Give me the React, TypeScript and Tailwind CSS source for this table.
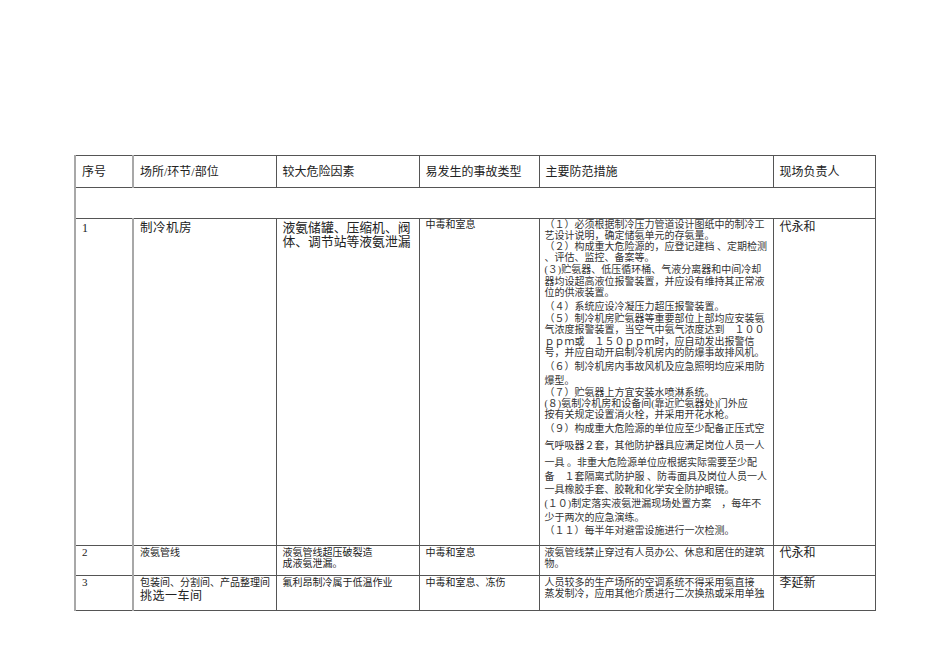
import React from 'react'

const lines: [string, string][] = [
  ['（１）必须根据制冷压力管道设计图纸中的制冷工', 'h-[11px]'],
  ['艺设计说明，确定储氨单元的存氨量。', 'h-[11px]'],
  ['（２）构成重大危险源的，应登记建档 、定期检测', 'h-[11px]'],
  ['、评估、监控、备案等。', 'h-[12px]'],
  ['(３)贮氨器、低压循环桶、气液分离器和中间冷却', 'h-[12px]'],
  ['器均设超高液位报警装置，并应设有维持其正常液', 'h-[11px]'],
  ['位的供液装置。', 'h-[14px]'],
  ['（４）系统应设冷凝压力超压报警装置。', 'h-[12px]'],
  ['（５）制冷机房贮氨器等重要部位上部均应安装氨', 'h-[11px]'],
  ['气浓度报警装置，当空气中氨气浓度达到　１００', 'h-[12px]'],
  ['ｐｐｍ或　１５０ｐｐｍ时，应自动发出报警信', 'h-[11px]'],
  ['号，并应自动开启制冷机房内的防爆事故排风机。', 'h-[14px]'],
  ['（６）制冷机房内事故风机及应急照明均应采用防', 'h-[14px]'],
  ['爆型。', 'h-[12px]'],
  ['（７）贮氨器上方宜安装水喷淋系统。', 'h-[11px]'],
  ['(８)氨制冷机房和设备间(靠近贮氨器处)门外应', 'h-[11px]'],
  ['按有关规定设置消火栓，并采用开花水枪。', 'h-[14px]'],
  ['（９）构成重大危险源的单位应至少配备正压式空', 'h-[17px]'],
  ['气呼吸器２套，其他防护器具应满足岗位人员一人', 'h-[17px]'],
  ['一具 。非重大危险源单位应根据实际需要至少配', 'h-[14px]'],
  ['备　１套隔离式防护服 、防毒面具及岗位人员一人', 'h-[13px]'],
  ['一具橡胶手套、胶靴和化学安全防护眼镜。', 'h-[14px]'],
  ['(１０)制定落实液氨泄漏现场处置方案　，每年不', 'h-[14px]'],
  ['少于两次的应急演练。', 'h-[13px]'],
  ['（１１）每半年对避雷设施进行一次检测。', 'h-[11px]'],
]

const cell = 'border border-[#555] px-[6px] overflow-hidden'
const first = 'border-l-2 border-l-[#a8a8a8] border-r-2 border-r-[#a8a8a8]'

export default function App() {
  return (
    <div
      className="w-[950px] h-[672px] bg-white pt-[155px] pl-[74px] text-[#222]"
      style={{ fontFamily: '"Liberation Serif", "Noto Sans CJK SC", serif' }}
    >
      <table className="table-fixed border-collapse w-[800px]">
        <colgroup>
          <col className="w-[58px]" />
          <col className="w-[143px]" />
          <col className="w-[143px]" />
          <col className="w-[120px]" />
          <col className="w-[234px]" />
          <col className="w-[102px]" />
        </colgroup>
        <tbody>
          {/* header */}
          <tr className="h-[32px] text-[12px] align-middle">
            <td className={`${cell} ${first}`}>序号</td>
            <td className={cell}>场所/环节/部位</td>
            <td className={cell}>较大危险因素</td>
            <td className={cell}>易发生的事故类型</td>
            <td className={cell}>主要防范措施</td>
            <td className={cell}>现场负责人</td>
          </tr>
          <tr className="h-[31px]">
            <td colSpan={6} className={`${cell} border-l-2 border-l-[#a8a8a8]`}></td>
          </tr>

          {/* row 1 */}
          <tr className="h-[327px] align-top">
            <td className={`${cell} ${first} text-[12px] leading-[14px] pt-[2px]`}>1</td>
            <td className={`${cell} text-[12.5px] leading-[14px] pt-[2px] tracking-[0.5px]`}>制冷机房</td>
            <td className={`${cell} text-[12.8px] leading-[14px] pt-[2px]`}>
              <div className="whitespace-nowrap">液氨储罐、压缩机、阀</div>
              <div className="whitespace-nowrap">体、调节站等液氨泄漏</div>
            </td>
            <td className={`${cell} text-[10px] leading-[11px]`}>中毒和室息</td>
            <td className={`${cell} text-[10px] pl-[5px] pr-[2px]`}>
              {lines.map(([t, h], i) => (
                <div key={i} className={`${h} leading-[11px] whitespace-nowrap text-[#333]`}>
                  {t}
                </div>
              ))}
            </td>
            <td className={`${cell} text-[12px] leading-[14px] pt-[1px]`}>代永和</td>
          </tr>

          {/* row 2 */}
          <tr className="h-[30px] align-top">
            <td className={`${cell} ${first} text-[11px] leading-[11px] pt-[1px]`}>2</td>
            <td className={`${cell} text-[10px] leading-[11px] pt-[1px]`}>液氨管线</td>
            <td className={`${cell} text-[10px] leading-[11px] pt-[1px]`}>
              <div>液氨管线超压破裂造</div>
              <div>成液氨泄漏。</div>
            </td>
            <td className={`${cell} text-[10px] leading-[11px] pt-[1px]`}>中毒和室息</td>
            <td className={`${cell} text-[10px] leading-[11px] pt-[1px] pl-[5px] pr-[2px] text-[#333]`}>
              <div className="whitespace-nowrap">液氨管线禁止穿过有人员办公、休息和居住的建筑</div>
              <div>物。</div>
            </td>
            <td className={`${cell} text-[12px] leading-[14px]`}>代永和</td>
          </tr>

          {/* row 3 */}
          <tr className="h-[35px] align-top">
            <td className={`${cell} ${first} text-[11px] leading-[11px] pt-[1px]`}>3</td>
            <td className={`${cell} leading-[11px] pt-[1px]`}>
              <div className="text-[10px] whitespace-nowrap">包装间、分割间、产品整理间</div>
              <div className="text-[12px] leading-[16px] tracking-[0.5px]">挑选一车间</div>
            </td>
            <td className={`${cell} text-[10px] leading-[11px] pt-[1px]`}>氟利昂制冷属于低温作业</td>
            <td className={`${cell} text-[10px] leading-[11px] pt-[1px] whitespace-nowrap`}>中毒和室息、冻伤</td>
            <td className={`${cell} text-[10px] leading-[11px] pt-[1px] pl-[5px] pr-[2px] text-[#333]`}>
              <div className="whitespace-nowrap">人员较多的生产场所的空调系统不得采用氨直接</div>
              <div className="whitespace-nowrap">蒸发制冷，应用其他介质进行二次换热或采用单独</div>
            </td>
            <td className={`${cell} text-[12px] leading-[14px]`}>李延新</td>
          </tr>
        </tbody>
      </table>
    </div>
  )
}
